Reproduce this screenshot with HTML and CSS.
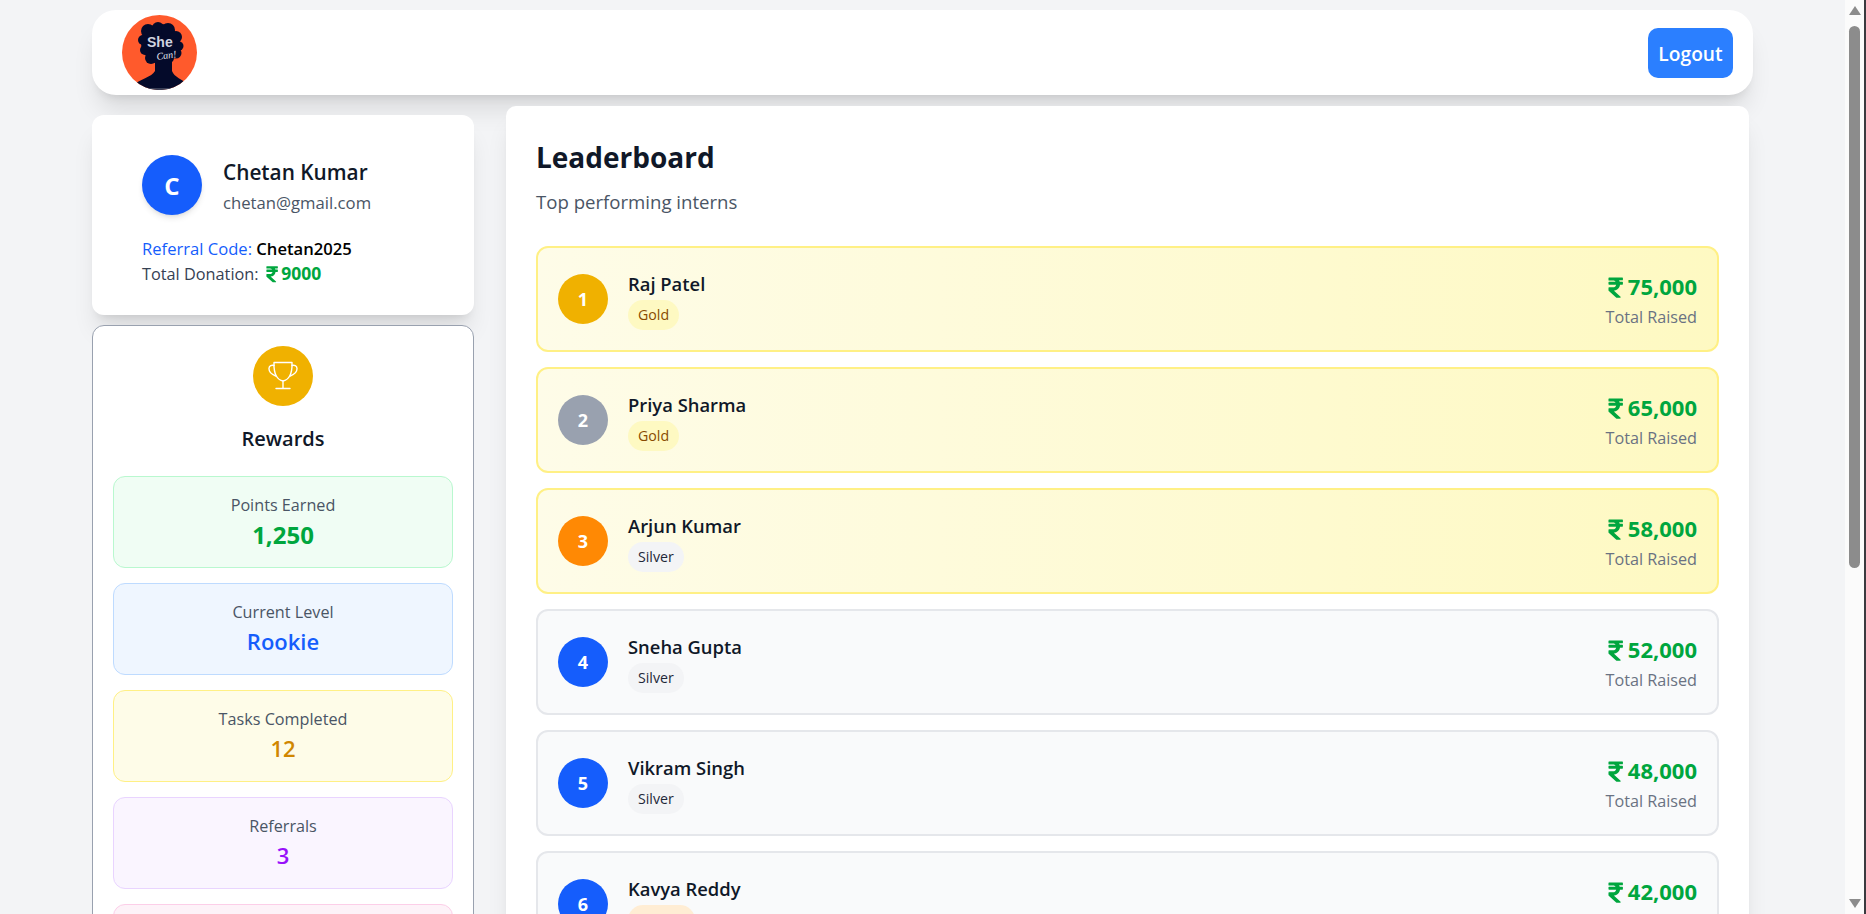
FILE: index.html
```html
<!DOCTYPE html>
<html lang="en">
<head>
  <meta charset="UTF-8" />
  <meta name="viewport" content="width=device-width, initial-scale=1" />
  <title>Leaderboard</title>
  <link rel="stylesheet" href="styles.css">
</head>
<body>

  <svg class="sprite" aria-hidden="true">
    <symbol id="rupee" viewBox="0 0 320 512">
      <path d="M308 96c6.627 0 12-5.373 12-12V44c0-6.627-5.373-12-12-12H12C5.373 32 0 37.373 0 44v44.748c0 6.627 5.373 12 12 12h85.28c27.308 0 48.261 9.958 60.97 27.252H12c-6.627 0-12 5.373-12 12v40c0 6.627 5.373 12 12 12h158.757c-6.217 36.086-32.961 58.632-74.757 58.632H12c-6.627 0-12 5.373-12 12v53.012c0 3.349 1.4 6.546 3.861 8.818l165.052 152.356a12.001 12.001 0 0 0 8.139 3.182h82.562c10.924 0 16.166-13.408 8.139-20.818L116.871 319.906c76.499-2.34 131.144-53.395 138.318-127.906H308c6.627 0 12-5.373 12-12v-40c0-6.627-5.373-12-12-12h-58.69c-3.486-11.541-8.28-22.246-14.252-32H308z"/>
    </symbol>
  </svg>

  <div class="window">
    <div class="page">

      <header class="topbar">
        <svg class="logo" viewBox="0 0 75 75">
          <defs><clipPath id="logoClip"><circle cx="37.5" cy="37.5" r="37.500"/></clipPath></defs>
          <g clip-path="url(#logoClip)">
            <rect width="75" height="75" fill="#ff5a2c"/>
            <g fill="#040a2a">
              <circle cx="38" cy="28" r="19"/>
              <circle cx="26" cy="16" r="7"/>
              <circle cx="36" cy="13" r="6"/>
              <circle cx="46" cy="15" r="7"/>
              <circle cx="54" cy="22" r="6"/>
              <circle cx="57" cy="31" r="4.500"/>
              <circle cx="54" cy="38" r="5.500"/>
              <circle cx="47" cy="43" r="5"/>
              <circle cx="29" cy="43" r="6"/>
              <circle cx="23" cy="35" r="5"/>
              <circle cx="21" cy="25" r="5"/>
              <path d="M33 44V56C30 62 18 64 8 72V75H68V71C60 64 52 62 50 56V44z"/>
            </g>
            <rect y="73" width="75" height="2" fill="#3a4058"/>
            <text class="logo-she" x="25" y="32">She</text>
            <text class="logo-can" x="35" y="45" transform="rotate(-8 35 45)">Can!</text>
          </g>
        </svg>
        <button class="logout">Logout</button>
      </header>

      <div class="layout">
        <aside class="sidebar">

          <section class="profile-card">
            <div class="profile-head">
              <div class="avatar">C</div>
              <div class="profile-text">
                <div class="profile-name">Chetan Kumar</div>
                <div class="profile-email">chetan@gmail.com</div>
              </div>
            </div>
            <div class="profile-line"><span class="ref-label">Referral Code:</span> <span class="ref-code">Chetan2025</span></div>
            <div class="profile-line donation">Total Donation: <span class="money-small"><svg class="rupee"><use href="#rupee"/></svg>9000</span></div>
          </section>

          <section class="rewards-card">
            <div class="trophy">
              <svg viewBox="0 0 30 30" fill="none" stroke="#fff" stroke-width="1.4" stroke-linecap="round" stroke-linejoin="round">
                <path d="M6 1.500h18c.2 6-.6 10.500-2.300 13.500-1.600 2.800-4 4.500-6.700 5-2.700-.5-5.100-2.200-6.700-5C6.600 12 5.800 7.500 6 1.500z"/>
                <path d="M6 4.500c-2.300-.9-4.800.2-5 2.800-.2 3 2.500 6 6.800 7.700"/>
                <path d="M24 4.500c2.300-.9 4.800.2 5 2.800.2 3-2.500 6-6.800 7.700"/>
                <path d="M15 20v7.500M8 27.500h14"/>
              </svg>
            </div>
            <h3 class="rewards-title">Rewards</h3>

            <div class="stat stat-green">
              <div class="stat-label">Points Earned</div>
              <div class="stat-value big">1,250</div>
            </div>
            <div class="stat stat-blue">
              <div class="stat-label">Current Level</div>
              <div class="stat-value">Rookie</div>
            </div>
            <div class="stat stat-yellow">
              <div class="stat-label">Tasks Completed</div>
              <div class="stat-value">12</div>
            </div>
            <div class="stat stat-purple">
              <div class="stat-label">Referrals</div>
              <div class="stat-value">3</div>
            </div>
            <div class="stat stat-pink">
              <div class="stat-label">Badges</div>
              <div class="stat-value">2</div>
            </div>
          </section>
        </aside>

        <main class="board">
          <h1 class="board-title">Leaderboard</h1>
          <p class="board-sub">Top performing interns</p>

          <div class="row row-top">
            <div class="rank rank-1">1</div>
            <div class="who">
              <div class="who-name">Raj Patel</div>
              <span class="badge gold">Gold</span>
            </div>
            <div class="raised">
              <div class="amount"><svg class="rupee"><use href="#rupee"/></svg>75,000</div>
              <div class="raised-label">Total Raised</div>
            </div>
          </div>

          <div class="row row-top">
            <div class="rank rank-2">2</div>
            <div class="who">
              <div class="who-name">Priya Sharma</div>
              <span class="badge gold">Gold</span>
            </div>
            <div class="raised">
              <div class="amount"><svg class="rupee"><use href="#rupee"/></svg>65,000</div>
              <div class="raised-label">Total Raised</div>
            </div>
          </div>

          <div class="row row-top">
            <div class="rank rank-3">3</div>
            <div class="who">
              <div class="who-name">Arjun Kumar</div>
              <span class="badge silver">Silver</span>
            </div>
            <div class="raised">
              <div class="amount"><svg class="rupee"><use href="#rupee"/></svg>58,000</div>
              <div class="raised-label">Total Raised</div>
            </div>
          </div>

          <div class="row">
            <div class="rank">4</div>
            <div class="who">
              <div class="who-name">Sneha Gupta</div>
              <span class="badge silver">Silver</span>
            </div>
            <div class="raised">
              <div class="amount"><svg class="rupee"><use href="#rupee"/></svg>52,000</div>
              <div class="raised-label">Total Raised</div>
            </div>
          </div>

          <div class="row">
            <div class="rank">5</div>
            <div class="who">
              <div class="who-name">Vikram Singh</div>
              <span class="badge silver">Silver</span>
            </div>
            <div class="raised">
              <div class="amount"><svg class="rupee"><use href="#rupee"/></svg>48,000</div>
              <div class="raised-label">Total Raised</div>
            </div>
          </div>

          <div class="row">
            <div class="rank">6</div>
            <div class="who">
              <div class="who-name">Kavya Reddy</div>
              <span class="badge bronze">Bronze</span>
            </div>
            <div class="raised">
              <div class="amount"><svg class="rupee"><use href="#rupee"/></svg>42,000</div>
              <div class="raised-label">Total Raised</div>
            </div>
          </div>
        </main>
      </div>
    </div>

    <div class="scrollbar">
      <div class="arrow-up"></div>
      <div class="track"><div class="thumb"></div></div>
      <div class="arrow-down"></div>
    </div>
    <div class="window-edge"></div>
  </div>

</body>
</html>
```

FILE: styles.css
```css
* {
  box-sizing: border-box;
}
html, body {
  margin: 0;
  height: 100%;
  overflow: hidden;
}
body {
  font-family: "Open Sans", "Noto Sans", sans-serif;
  background: #f3f4f6;
  color: #101828;
}
.sprite {
  display: none;
}
.window {
  display: flex;
  height: 100%;
}
.page {
  flex: 1;
  min-width: 0;
  height: 100%;
  overflow: hidden;
  padding: 10px 92px 0;
}

/* fake windows scrollbar */
.scrollbar {
  width: 19px;
  display: flex;
  flex-direction: column;
  align-items: center;
  background: #fbfbfb;
  padding: 6px 0;
}
.track {
  flex: 1;
  width: 100%;
  padding: 11px 4px 0;
}
.thumb {
  height: 542px;
  background: #8c8c8c;
  border-radius: 6px;
}
.arrow-up,
.arrow-down {
  width: 0;
  height: 0;
  border-left: 6px solid transparent;
  border-right: 6px solid transparent;
}
.arrow-up {
  border-bottom: 9px solid #8c8c8c;
}
.arrow-down {
  border-top: 9px solid #8c8c8c;
}
.window-edge {
  width: 2px;
  background: #3a3a3f;
}

/* header */
.topbar {
  display: flex;
  justify-content: space-between;
  align-items: center;
  height: 85px;
  padding: 0 20px 0 30px;
  background: white;
  border-radius: 24px;
  box-shadow: 0 20px 25px -5px rgba(0,0,0,0.1), 0 8px 10px -6px rgba(0,0,0,0.1);
}
.logo {
  width: 75px;
  height: 75px;
  display: block;
}
.logo-she {
  font-family: "Liberation Sans", sans-serif;
  font-size: 14px;
  font-weight: 700;
  fill: #cfd3e0;
}
.logo-can {
  font-family: "Liberation Serif", serif;
  font-size: 10px;
  font-style: italic;
  fill: #e6e8f0;
}
.logout {
  width: 85px;
  height: 50px;
  padding: 2px 0 0;
  border: none;
  border-radius: 10px;
  background: #2b7fff;
  color: white;
  font-family: inherit;
  font-size: 19.2px;
  font-weight: 600;
}

/* columns */
.layout {
  display: grid;
  grid-template-columns: 382px 1243px;
  column-gap: 32px;
  align-items: start;
}
.sidebar {
  padding-top: 20px;
}
.profile-card {
  height: 200px;
  padding: 40px 50px 0;
  background: white;
  border-radius: 12px;
  box-shadow: 0 20px 25px -5px rgba(0,0,0,0.1), 0 8px 10px -6px rgba(0,0,0,0.1);
}
.profile-head {
  display: flex;
  align-items: center;
  gap: 21px;
  margin-bottom: 21px;
}
.avatar {
  width: 60px;
  height: 60px;
  border-radius: 50%;
  background: #155dfc;
  color: white;
  display: flex;
  align-items: center;
  justify-content: center;
  font-size: 24px;
  font-weight: 700;
  box-shadow: 0 4px 6px -1px rgba(0,0,0,0.1), 0 2px 4px -2px rgba(0,0,0,0.1);
}
.profile-text {
  padding-top: 2px;
}
.profile-name {
  font-size: 20.8px;
  font-weight: 600;
  line-height: 30px;
  margin-bottom: 4px;
}
.profile-email {
  font-size: 16.7px;
  line-height: 24px;
  color: #4a5565;
}
.profile-line {
  font-size: 16.6px;
  line-height: 25px;
}
.ref-label {
  color: #155dfc;
  font-weight: 500;
}
.ref-code {
  color: #000;
  font-weight: 600;
}
.donation {
  font-size: 16.3px;
  color: #364153;
}
.money-small {
  font-size: 17.5px;
  color: #00a63e;
  font-weight: 700;
  margin-left: 3px;
}
.rupee {
  width: 0.7em;
  height: 1.05em;
  fill: currentColor;
  vertical-align: -0.2em;
  margin-right: 0.18em;
}

/* rewards */
.rewards-card {
  margin-top: 10px;
  padding: 20px 20px 24px;
  background: white;
  border: 1px solid #99a1af;
  border-radius: 12px;
}
.trophy {
  width: 60px;
  height: 60px;
  margin: 0 auto;
  border-radius: 50%;
  background: #f0b100;
  display: flex;
  align-items: center;
  justify-content: center;
}
.trophy svg {
  width: 30px;
  height: 30px;
}
.rewards-title {
  margin: 17px 0 21px;
  text-align: center;
  font-size: 20px;
  font-weight: 600;
  line-height: 32px;
}
.stat {
  height: 92px;
  margin-bottom: 15px;
  border: 1px solid;
  border-radius: 12px;
  text-align: center;
  padding-top: 16px;
}
.stat-label {
  font-size: 16.2px;
  line-height: 24px;
  color: #4a5565;
}
.stat-value {
  margin-top: 1px;
  font-size: 22px;
  font-weight: 600;
  line-height: 32px;
}
.stat-value.big {
  margin-top: 2px;
  font-size: 24px;
  font-weight: 700;
}
.stat-green {
  background: #f0fdf4;
  border-color: #b9f8cf;
}
.stat-green .stat-value {
  color: #00a63e;
}
.stat-blue {
  background: #eff6ff;
  border-color: #bedbff;
}
.stat-blue .stat-value {
  color: #155dfc;
}
.stat-yellow {
  background: #fefce8;
  border-color: #fff085;
}
.stat-yellow .stat-value {
  color: #d08700;
}
.stat-purple {
  background: #faf5ff;
  border-color: #e9d4ff;
}
.stat-purple .stat-value {
  color: #9810fa;
}
.stat-pink {
  background: #fdf2f8;
  border-color: #fccee8;
}
.stat-pink .stat-value {
  color: #e60076;
}

/* leaderboard */
.board {
  margin-top: 11px;
  padding: 30px;
  background: white;
  border-radius: 10px;
  box-shadow: 0 20px 25px -5px rgba(0,0,0,0.1), 0 8px 10px -6px rgba(0,0,0,0.1);
}
.board-title {
  margin: 0;
  font-size: 28px;
  font-weight: 700;
  line-height: 42px;
}
.board-sub {
  margin: 10px 0 30px;
  font-size: 18.6px;
  line-height: 28px;
  color: #4a5565;
}
.row {
  display: flex;
  align-items: center;
  height: 106px;
  margin-bottom: 15px;
  padding: 0 20px;
  background: #f9fafb;
  border: 2px solid #e5e7eb;
  border-radius: 12px;
}
.row-top {
  background: linear-gradient(to right, #fefce8, #fef9c2);
  border-color: #fff085;
}
.rank {
  width: 50px;
  height: 50px;
  flex-shrink: 0;
  border-radius: 50%;
  background: #155dfc;
  color: white;
  display: flex;
  align-items: center;
  justify-content: center;
  font-size: 18px;
  font-weight: 700;
}
.rank-1 {
  background: #f0b100;
}
.rank-2 {
  background: #99a1af;
}
.rank-3 {
  background: #ff8904;
}
.who {
  flex: 1;
  margin-left: 20px;
  padding-top: 2px;
}
.who-name {
  font-size: 18.4px;
  font-weight: 600;
  line-height: 28px;
  margin-bottom: 2px;
}
.badge {
  display: inline-block;
  height: 30px;
  padding: 0 10px;
  border-radius: 15px;
  font-size: 14.2px;
  font-weight: 500;
  line-height: 30px;
}
.gold {
  background: #fef9c2;
  color: #894b00;
}
.silver {
  background: #f3f4f6;
  color: #1e2939;
}
.bronze {
  background: #ffedd4;
  color: #9f2d00;
}
.raised {
  text-align: right;
}
.amount {
  font-size: 22px;
  font-weight: 700;
  line-height: 32px;
  color: #00a63e;
}
.raised-label {
  margin-top: 3px;
  font-size: 16.2px;
  line-height: 24px;
  color: #6a7282;
}
```
